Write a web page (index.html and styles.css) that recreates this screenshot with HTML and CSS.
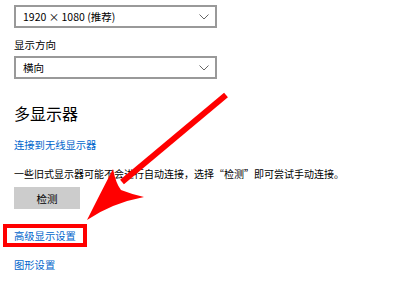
FILE: index.html
```html
<!DOCTYPE html>
<html lang="zh-CN">
<head>
  <meta charset="UTF-8">
  <title>显示设置</title>
  <link rel="stylesheet" href="styles.css">
</head>
<body>
  <main class="page">
    <div class="select first">
      <span>1920 × 1080 (推荐)</span>
      <svg class="chev" width="10" height="6" viewBox="0 0 10 6"><path d="M0.5 0.5 L5 5 L9.5 0.5" fill="none" stroke="#666" stroke-width="1"/></svg>
    </div>
    <div class="label">显示方向</div>
    <div class="select">
      <span>横向</span>
      <svg class="chev" width="10" height="6" viewBox="0 0 10 6"><path d="M0.5 0.5 L5 5 L9.5 0.5" fill="none" stroke="#666" stroke-width="1"/></svg>
    </div>

    <h2>多显示器</h2>
    <a class="link wireless">连接到无线显示器</a>
    <p class="note">一些旧式显示器可能不会进行自动连接，选择“检测”即可尝试手动连接。</p>
    <button class="detect">检测</button>
    <a class="link advanced">高级显示设置</a>
    <a class="link graphics">图形设置</a>
  </main>

  <!-- 标注：红框 + 箭头 -->
  <svg class="mark" width="400" height="300" viewBox="0 0 400 300">
    <rect x="5" y="226" width="80" height="19" fill="none" stroke="#f00" stroke-width="4"/>
    <line x1="226" y1="95" x2="122" y2="182" stroke="#f00" stroke-width="6"/>
    <path d="M87 220 Q99 196 113 169 Q116 184 121 190 Q131 194 144 197 Q112 203 87 220 Z" fill="#f00"/>
  </svg>
</body>
</html>
```
FILE: styles.css
```css
* {
  margin: 0;
  padding: 0;
  box-sizing: border-box;
}
body {
  width: 400px;
  height: 300px;
  background: #fff;
  color: #000;
  font-family: "Noto Sans CJK SC", "Liberation Sans", sans-serif;
  position: relative;
  overflow: hidden;
}
.page {
  padding: 5px 0 0 14px;
  display: flex;
  flex-direction: column;
  align-items: flex-start;
}
.select {
  width: 203px;
  height: 23px;
  border: 2px solid #999;
  display: flex;
  align-items: center;
  justify-content: space-between;
  padding: 0 6px 0 7px;
  font-size: 10.5px;
}
.label {
  font-size: 10.5px;
  line-height: 14px;
  margin: 10px 0 4px;
}
h2 {
  font-weight: normal;
  font-size: 16px;
  line-height: 20px;
  margin-top: 24px;
}
.link {
  color: #0066cc;
  font-size: 10.3px;
  line-height: 14px;
}
.wireless {
  margin-top: 15px;
}
.note {
  font-size: 10px;
  line-height: 14px;
  margin-top: 15px;
}
.detect {
  width: 66px;
  height: 22px;
  margin-top: 6px;
  border: none;
  background: #ccc;
  font-family: inherit;
  font-size: 10.5px;
  color: #000;
}
.advanced {
  margin-top: 20px;
}
.graphics {
  margin-top: 15px;
}
.mark {
  position: absolute;
  left: 0;
  top: 0;
}
```
